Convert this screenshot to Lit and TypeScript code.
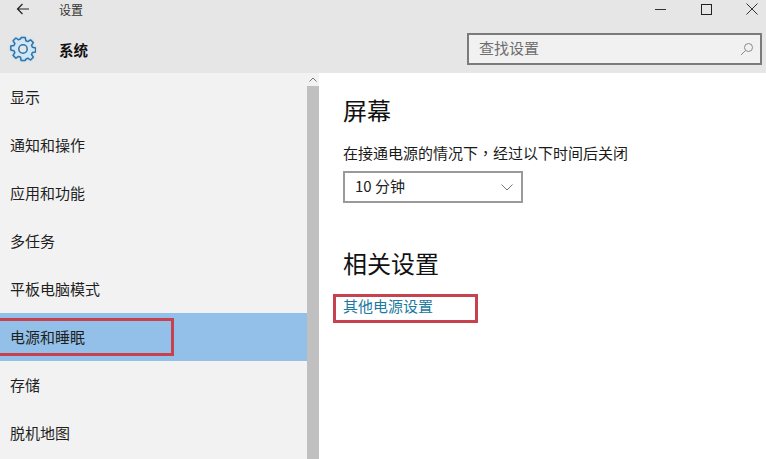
import { LitElement, html, css } from "lit";
import { customElement } from "lit/decorators.js";

const ITEMS = ["显示", "通知和操作", "应用和功能", "多任务", "平板电脑模式", "电源和睡眠", "存储", "脱机地图"];

@customElement("app-root")
export class AppRoot extends LitElement {
  static styles = css`
    :host {
      display: block;
      width: 766px;
      height: 459px;
      overflow: hidden;
      position: relative;
      font-family: "Noto Sans CJK SC", "Liberation Sans", sans-serif;
      font-size: 15px;
      color: #1a1a1a;
      background: #fff;
    }
    .header { height: 73px; box-sizing: border-box; background: #e6e6e6; display: flex; flex-direction: column; }
    .titlebar { height: 18px; display: flex; align-items: center; }
    .back { width: 59px; display: flex; justify-content: center; padding-right: 13px; box-sizing: border-box; }
    .title { font-size: 12px; line-height: 17px; color: #333; }
    .spacer { flex: 1; }
    .winbtns { display: flex; align-items: center; gap: 18px; }
    .winbtn { width: 28px; display: flex; justify-content: center; }
    .subbar { flex: 1; display: flex; align-items: center; padding: 7px 4px 0 10px; }
    .gear { width: 49px; display: flex; }
    .gear svg { filter: drop-shadow(0 0 1px #a6d6f5); }
    .sys { font-weight: 700; font-size: 14.5px; color: #111; }
    .search {
      width: 295px; height: 32px; box-sizing: border-box;
      border: 2px solid #7b7b7b; background: #f1f1f1;
      display: flex; align-items: center; justify-content: space-between;
      padding: 0 6px 0 10px; color: #6e6e6e;
    }
    .search span { padding-bottom: 3px; }
    .body { display: flex; height: 386px; }
    .side { width: 307px; background: #f2f2f2; }
    .row { height: 48px; box-sizing: border-box; display: flex; align-items: center; padding: 0 0 2px 10px; color: #1f1f1f; }
    .row.sel { background: #92c0e8; }
    .scroll { width: 12px; background: #f2f2f2; display: flex; flex-direction: column; }
    .arrow { height: 13px; display: flex; justify-content: center; align-items: center; }
    .thumb { flex: 1; background: #c0c0c0; }
    .main { flex: 1; padding: 22px 0 0 24px; }
    h2 { margin: 0; font-size: 24px; font-weight: 400; line-height: 30px; color: #111; }
    .label { margin-top: 17px; line-height: 22px; }
    .comma { font-family: "Noto Sans CJK TC", sans-serif; }
    .select {
      margin-top: 7px; width: 180px; height: 32px; box-sizing: border-box;
      border: 2px solid #9a9a9a; display: flex; align-items: center; justify-content: space-between;
      padding: 0 8px 0 10px; color: #222;
    }
    .select span { padding-bottom: 3px; }
    .h2b { margin-top: 45px; }
    .link { margin-top: 17px; line-height: 22px; color: #1b7a9f; }
    .mark { position: absolute; box-sizing: border-box; border: 3px solid #c8414f; pointer-events: none; }
    .m1 { left: -3px; top: 318px; width: 177px; height: 38px; }
    .m2 { left: 333px; top: 294px; width: 145px; height: 29px; }
  `;

  render() {
    return html`
      <div class="header">
        <div class="titlebar">
          <div class="back">
            <svg width="14" height="12" viewBox="0 0 14 12" fill="none" stroke="#222" stroke-width="1.2"><path d="M13 6H1.5M6.500 1 1.500 6l5 5"/></svg>
          </div>
          <div class="title">设置</div>
          <div class="spacer"></div>
          <div class="winbtns">
            <div class="winbtn"><svg width="11" height="11" viewBox="0 0 11 11" stroke="#333" stroke-width="1"><path d="M0 5.500h11"/></svg></div>
            <div class="winbtn"><svg width="11" height="11" viewBox="0 0 11 11" fill="none" stroke="#222" stroke-width="1"><rect x=".5" y=".5" width="10" height="10"/></svg></div>
            <div class="winbtn"><svg width="12" height="12" viewBox="0 0 12 12" stroke="#333" stroke-width="1"><path d="M.5.500l11 11M11.500.500l-11 11"/></svg></div>
          </div>
        </div>
        <div class="subbar">
          <div class="gear">
            <svg width="26" height="26" viewBox="0 0 26 26" fill="#cfe6f7" stroke="#2f73a8" stroke-width="1.500" stroke-linejoin="round">
              <path d="M11 2h4l.6 3.200 2 .9 2.700-1.800 2.800 2.800-1.800 2.700.9 2 3.200.6v4l-3.200.6-.9 2 1.800 2.700-2.800 2.800-2.700-1.800-2 .9L15 25h-4l-.6-3.200-2-.9-2.700 1.800-2.800-2.800 1.800-2.700-.9-2L0.600 14.600v-4l3.200-.6.9-2L2.900 5.300l2.800-2.800 2.700 1.800 2-.9z" transform="translate(0.200 -0.500)"/>
              <circle cx="13" cy="13" r="4.200" fill="#e6e6e6"/>
            </svg>
          </div>
          <div class="sys">系统</div>
          <div class="spacer"></div>
          <div class="search">
            <span>查找设置</span>
            <svg width="14" height="14" viewBox="0 0 14 14" fill="none" stroke="#8a8a8a" stroke-width="1"><circle cx="8.500" cy="5.500" r="4"/><path d="M5.500 8.500 1 13"/></svg>
          </div>
        </div>
      </div>
      <div class="body">
        <div class="side">
          ${ITEMS.map((t, i) => html`<div class="row ${i === 5 ? "sel" : ""}">${t}</div>`)}
        </div>
        <div class="scroll">
          <div class="arrow"><svg width="8" height="5" viewBox="0 0 8 5" fill="none" stroke="#777" stroke-width="1"><path d="M.5 4.500 4 1l3.500 3.500"/></svg></div>
          <div class="thumb"></div>
        </div>
        <div class="main">
          <h2>屏幕</h2>
          <div class="label">在接通电源的情况下<span class="comma">，</span>经过以下时间后关闭</div>
          <div class="select">
            <span>10 分钟</span>
            <svg width="12" height="7" viewBox="0 0 12 7" fill="none" stroke="#777" stroke-width="1"><path d="M.5.500 6 6l5.500-5.500"/></svg>
          </div>
          <h2 class="h2b">相关设置</h2>
          <div class="link">其他电源设置</div>
        </div>
      </div>
      <div class="mark m1"></div>
      <div class="mark m2"></div>
    `;
  }
}
